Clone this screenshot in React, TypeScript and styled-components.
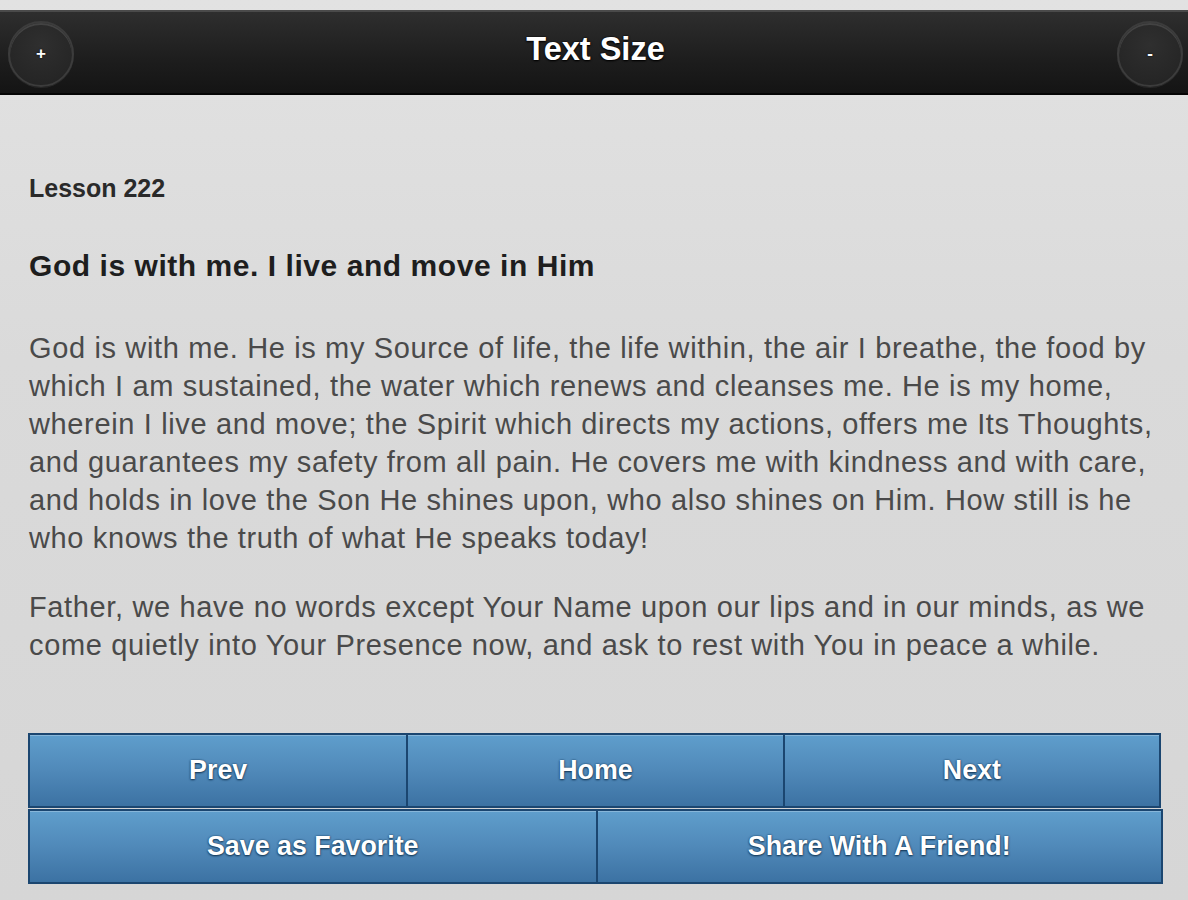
import styled, { createGlobalStyle } from 'styled-components';

const GlobalStyle = createGlobalStyle`
  html, body {
    margin: 0;
    padding: 0;
    background: #dcdcdc;
    font-family: "Liberation Sans", Arial, sans-serif;
  }
`;

const Page = styled.div`
  min-height: 900px;
  padding-top: 10px;
  background: linear-gradient(180deg, #e2e2e2 0%, #dadada 40%, #d6d6d6 100%);
  box-sizing: border-box;
`;

const Header = styled.header`
  height: 85px;
  box-sizing: border-box;
  display: flex;
  align-items: center;
  justify-content: space-between;
  padding: 0 5px 0 8px;
  background: linear-gradient(180deg, #2e2e2e 0%, #1d1d1d 60%, #141414 100%);
  border-top: 2px solid #4a4a4a;
  border-bottom: 2px solid #050505;
`;

const RoundButton = styled.button`
  width: 66px;
  height: 66px;
  border-radius: 50%;
  border: 2px solid #3c3c3c;
  background: radial-gradient(circle at 50% 35%, #2f2f2f 0%, #262626 70%, #202020 100%);
  box-shadow: inset 0 2px 0 rgba(255, 255, 255, 0.12), 0 1px 0 rgba(255, 255, 255, 0.08);
  color: #fff;
  font-family: "Liberation Sans", Arial, sans-serif;
  font-weight: bold;
  font-size: 17px;
  line-height: 1;
  padding: 0;
  margin-top: 2px;
  text-shadow: 0 0 2px #000;
  cursor: pointer;
`;

const Title = styled.h1`
  margin: 0;
  color: #fff;
  font-size: 32.5px;
  font-weight: bold;
  text-shadow: 0 1px 2px #000, 0 0 2px #000;
  padding-bottom: 6px;
`;

const Content = styled.main`
  padding: 0 27px 0 29px;
`;

const Lesson = styled.h3`
  margin: 79px 0 0;
  font-size: 25px;
  line-height: 28px;
  font-weight: bold;
  color: #2a2a2a;
`;

const Heading = styled.h2`
  margin: 47px 0 0;
  font-size: 30px;
  line-height: 34px;
  font-weight: bold;
  letter-spacing: 0.55px;
  color: #1e1e1e;
`;

const Paragraph = styled.p<{ $gap: number }>`
  margin: ${p => p.$gap}px 0 0;
  font-size: 29px;
  line-height: 38px;
  letter-spacing: 0.64px;
  color: #4a4a4a;
`;

const ButtonBlock = styled.nav`
  margin: 69px 0 0 -1px;
  display: flex;
  flex-direction: column;
`;

const ButtonRow = styled.div<{ $cols: number; $extra: number }>`
  display: grid;
  grid-template-columns: repeat(${p => p.$cols}, 1fr);
  width: calc(100% + ${p => p.$extra}px);
  border: 2px solid #1b4670;
  box-sizing: border-box;
  & + & {
    margin-top: 1px;
  }
`;

const NavButton = styled.button`
  height: 71px;
  border: none;
  border-left: 2px solid #1b4670;
  background: linear-gradient(180deg, #5f9ecc 0%, #5089b9 50%, #3c72a3 100%);
  box-shadow: inset 0 1px 0 rgba(255, 255, 255, 0.25);
  color: #fff;
  font-family: "Liberation Sans", Arial, sans-serif;
  font-size: 26.8px;
  font-weight: bold;
  text-shadow: 0 1px 2px #123654, 0 0 2px #1a3f60;
  cursor: pointer;
  &:first-child {
    border-left: none;
  }
`;

const App = () => {
	return (
		<>
			<GlobalStyle />
			<Page>
				<Header>
					<RoundButton>+</RoundButton>
					<Title>Text Size</Title>
					<RoundButton>-</RoundButton>
				</Header>
				<Content>
					<Lesson>Lesson 222</Lesson>
					<Heading>God is with me. I live and move in Him</Heading>
					<Paragraph $gap={46}>
						God is with me. He is my Source of life, the life within, the air I breathe, the food by which I am sustained, the water which renews and cleanses me. He is my home, wherein I live and move; the Spirit which directs my actions, offers me Its Thoughts, and guarantees my safety from all pain. He covers me with kindness and with care, and holds in love the Son He shines upon, who also shines on Him. How still is he who knows the truth of what He speaks today!
					</Paragraph>
					<Paragraph $gap={31}>
						Father, we have no words except Your Name upon our lips and in our minds, as we come quietly into Your Presence now, and ask to rest with You in peace a while.
					</Paragraph>
					<ButtonBlock>
						<ButtonRow $cols={3} $extra={0}>
							<NavButton>Prev</NavButton>
							<NavButton>Home</NavButton>
							<NavButton>Next</NavButton>
						</ButtonRow>
						<ButtonRow $cols={2} $extra={2}>
							<NavButton>Save as Favorite</NavButton>
							<NavButton>Share With A Friend!</NavButton>
						</ButtonRow>
					</ButtonBlock>
				</Content>
			</Page>
		</>
	);
};

export default App;
